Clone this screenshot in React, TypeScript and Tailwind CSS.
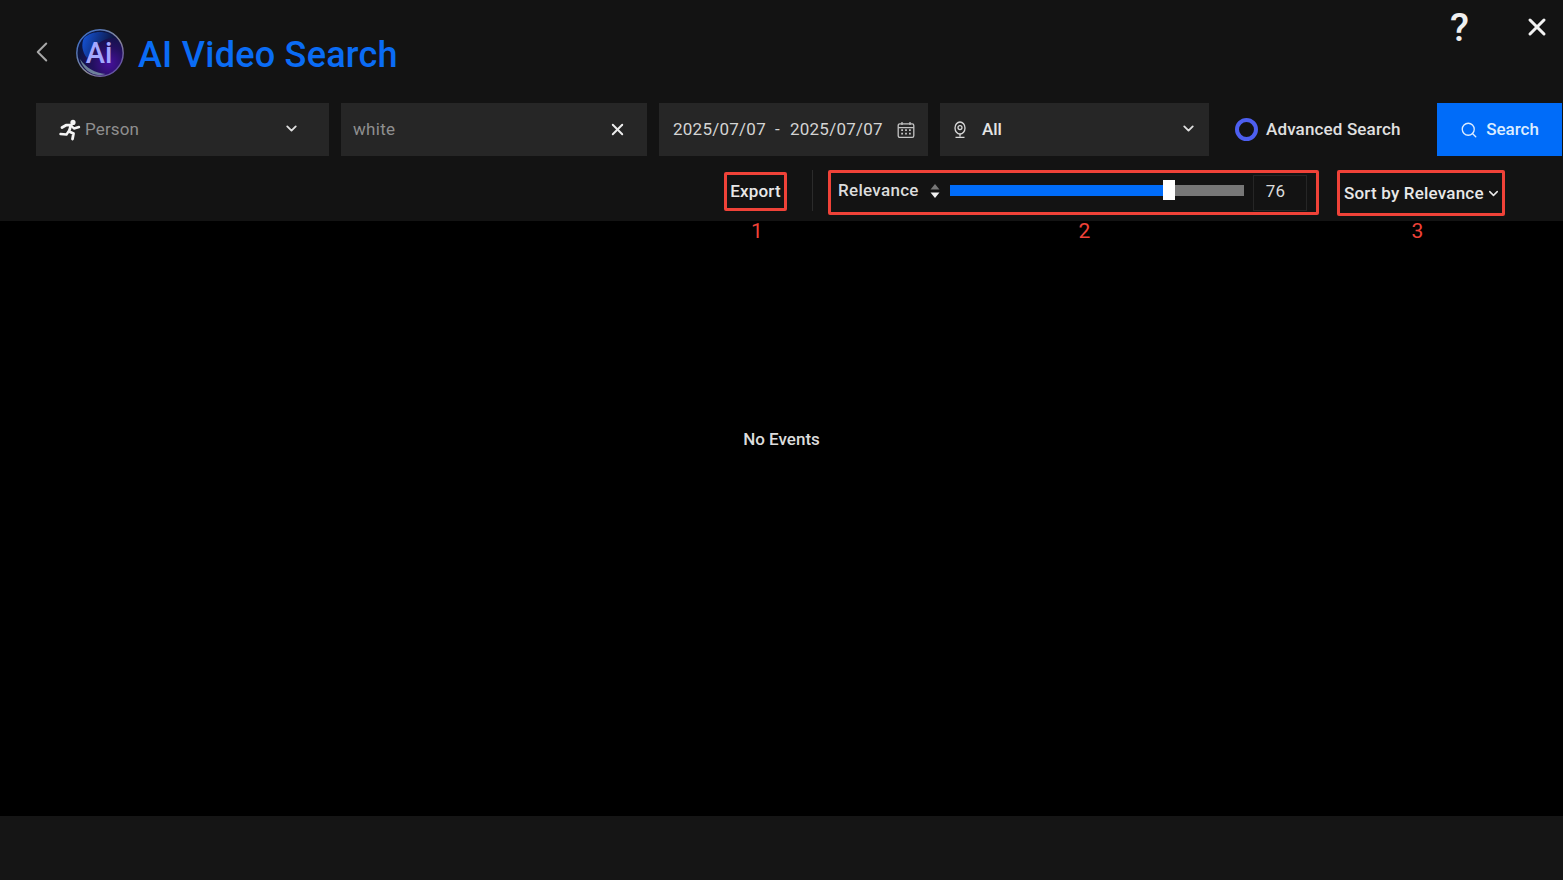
import { ChevronDown, ChevronLeft, Search, X } from "lucide-react";

function AiLogo() {
  return (
    <svg width="50" height="50" viewBox="0 0 50 50" className="shrink-0">
      <defs>
        <radialGradient id="aiBase" cx="0.7" cy="0.72" r="0.7">
          <stop offset="0" stopColor="#47109c" />
          <stop offset="0.5" stopColor="#241060" />
          <stop offset="1" stopColor="#0b1640" />
        </radialGradient>
        <linearGradient id="aiRim" x1="0" y1="0" x2="1" y2="1">
          <stop offset="0" stopColor="#2a66d0" />
          <stop offset="0.55" stopColor="#8d8d98" />
          <stop offset="1" stopColor="#5238a8" />
        </linearGradient>
        <linearGradient id="aiGlow" x1="0" y1="0" x2="1" y2="0.3">
          <stop offset="0" stopColor="#1557e0" />
          <stop offset="1" stopColor="#0c1238" />
        </linearGradient>
      </defs>
      <circle cx="25" cy="25" r="23.2" fill="url(#aiBase)" stroke="url(#aiRim)" strokeWidth="1.4" />
      <path d="M9 10C17 2 33 2 40 10C30 9 18 16 12 30C7 24 6 16 9 10Z" fill="url(#aiGlow)" />
      <path d="M5 31C11 40 20 45 31 46C20 50 8 43 5 31Z" fill="#8fb0b5" opacity="0.7" />
      <text
        x="24"
        y="35"
        textAnchor="middle"
        fontFamily="Roboto, sans-serif"
        fontSize="29"
        fontWeight="500"
        fill="#a3a8ff"
      >
        Ai
      </text>
    </svg>
  );
}

function RunnerIcon() {
  return (
    <svg width="22" height="22" viewBox="0 0 22 22" fill="none" className="shrink-0">
      <circle cx="14" cy="3.4" r="2.6" fill="#f4f4f4" />
      <path
        d="M3 8.5L7 6.2H12L10 12.5L14.5 14.5L13.5 20"
        stroke="#f4f4f4"
        strokeWidth="2.8"
        strokeLinecap="round"
        strokeLinejoin="round"
      />
      <path d="M12 6.5L15 9.5L20 8M9.5 12.5L7.5 15.5L1.5 15" stroke="#f4f4f4" strokeWidth="2.4" strokeLinecap="round" strokeLinejoin="round" />
    </svg>
  );
}

function CalendarIcon() {
  return (
    <svg width="18" height="18" viewBox="0 0 18 18" fill="none" stroke="#c4c4c4" strokeWidth="1.3" className="shrink-0">
      <rect x="1.2" y="2.8" width="15.6" height="13.6" rx="1.6" />
      <path d="M1.2 6.6H16.8M5 1V4M13 1V4" />
      <path d="M4.2 9.2H6M8.1 9.2H9.9M12 9.2H13.8M4.2 12.6H6M8.1 12.6H9.9M12 12.6H13.8" strokeWidth="1.7" />
    </svg>
  );
}

function CameraIcon() {
  return (
    <svg width="14" height="18" viewBox="0 0 14 18" fill="none" stroke="#d8d8d8" strokeWidth="1.3" className="shrink-0">
      <ellipse cx="7" cy="7" rx="5" ry="6" />
      <circle cx="7" cy="6.6" r="2" />
      <path d="M7 13V15.5M2.5 16.4H11.5" />
    </svg>
  );
}

function SortArrows() {
  return (
    <svg width="10" height="16" viewBox="0 0 10 16" className="shrink-0">
      <path d="M5 1L9.5 6.5H0.5Z" fill="#777777" />
      <path d="M5 15L9.5 9.5H0.5Z" fill="#f0f0f0" />
    </svg>
  );
}

export default function App() {
  const relevance = 76;

  return (
    <div className="flex h-[880px] w-[1563px] flex-col overflow-hidden bg-black font-['Roboto',sans-serif] text-[#e4e4e4]">
      <header className="flex h-[221px] shrink-0 flex-col bg-[#131313]">
        {/* Title */}
        <div className="flex h-[103px] items-start pl-[25px]">
          <ChevronLeft className="mt-[35px] h-[34px] w-[34px] text-[#a8a8a8]" strokeWidth={1.4} />
          <div className="mt-[28px] ml-[16px] flex items-start">
            <AiLogo />
            <h1 className="mt-[2px] ml-[13px] text-[36px] leading-[50px] font-medium tracking-[0.25px] text-[#0a6cf5]">
              AI Video Search
            </h1>
          </div>
          <div className="ml-auto flex items-center gap-[54px] pt-[8px] pr-[12px]">
            <span className="text-[39px] leading-[40px] font-medium text-[#efefef]">?</span>
            <X className="-mt-[2px] h-[28px] w-[28px] text-[#f2f2f2]" strokeWidth={2.6} />
          </div>
        </div>

        {/* Search filters */}
        <div className="flex h-[53px] items-stretch pl-[36px] text-[17px]">
          <div className="flex w-[293px] items-center bg-[#262626] pr-[29px] pl-[23px]">
            <RunnerIcon />
            <span className="ml-[4px] tracking-[0.15px] text-[#8f8f8f]">Person</span>
            <ChevronDown className="mb-[2px] ml-auto h-[17px] w-[17px] text-[#e0e0e0]" strokeWidth={2.6} />
          </div>
          <div className="ml-[12px] flex w-[306px] items-center bg-[#262626] pr-[20px] pl-[12px]">
            <span className="tracking-[0.3px] text-[#8f8f8f]">white</span>
            <X className="ml-auto h-[19px] w-[19px] text-[#ededed]" strokeWidth={2.4} />
          </div>
          <div className="ml-[12px] flex w-[269px] items-center bg-[#262626] pr-[13px] pl-[14px] tracking-[0.25px] text-[#d4d4d4]">
            <span>2025/07/07</span>
            <span className="mr-[10px] ml-[9px]">-</span>
            <span>2025/07/07</span>
            <span className="ml-auto">
              <CalendarIcon />
            </span>
          </div>
          <div className="ml-[12px] flex w-[269px] items-center bg-[#262626] pr-[12px] pl-[13px]">
            <CameraIcon />
            <span className="ml-[15px] font-medium text-[#e4e4e4]">All</span>
            <ChevronDown className="mb-[2px] ml-auto h-[17px] w-[17px] text-[#e0e0e0]" strokeWidth={2.6} />
          </div>
          <div className="ml-[26px] flex w-[202px] items-center">
            <span className="h-[23px] w-[23px] shrink-0 rounded-full border-[4px] border-[#4d5ff0]" />
            <span className="ml-[8px] font-medium tracking-[0.15px] text-[#e0e0e0]">Advanced Search</span>
          </div>
          <button className="flex w-[125px] items-center justify-center gap-[8px] bg-[#006cf9] font-medium text-[#dcecff]">
            <Search className="h-[18px] w-[18px]" strokeWidth={1.8} />
            Search
          </button>
        </div>

        {/* Result tools */}
        <div className="flex flex-1 items-start justify-end pt-[14px] pr-[58px] text-[17px] font-medium tracking-[0.2px]">
          <div className="relative mt-[2px] flex h-[39px] w-[63px] items-center justify-center rounded-[2px] border-[3px] border-[#ef4238] text-[#e8e8e8]">
            Export
            <span className="absolute top-[43px] left-0 w-full pl-[3px] text-center text-[21px] leading-[26px] font-normal text-[#ef4238]">
              1
            </span>
          </div>
          <div className="mr-[15px] ml-[25px] h-[41px] w-px bg-[#2b2b2b]" />
          <div className="relative flex h-[45px] w-[491px] items-center rounded-[2px] border-[3px] border-[#ef4238] pr-[9px] pb-[4px] pl-[7px] text-[#dcdcdc]">
            <span className="tracking-[0.3px]">Relevance</span>
            <span className="ml-[11px]">
              <SortArrows />
            </span>
            <div className="relative ml-[10px] h-[11px] w-[294px] bg-[#777777]">
              <div className="h-full bg-[#006cf9]" style={{ width: `${relevance - 1.5}%` }} />
              <div className="absolute top-[-5px] left-[213px] h-[20px] w-[12px] bg-white" />
            </div>
            <div className="mt-[4px] ml-[9px] flex h-[36px] w-[54px] items-center border border-[#262626] pb-[1px] pl-[12px] font-normal">
              {relevance}
            </div>
            <span className="absolute top-[45px] left-0 w-full pl-[22px] text-center text-[21px] leading-[26px] font-normal text-[#ef4238]">
              2
            </span>
          </div>
          <div className="relative ml-[18px] flex h-[46px] w-[168px] items-center rounded-[2px] border-[3px] border-[#ef4238] pt-[1px] pl-[4px] text-[#e8e8e8]">
            <span className="whitespace-nowrap">Sort by Relevance</span>
            <ChevronDown className="ml-[2px] h-[15px] w-[15px]" strokeWidth={2.4} />
            <span className="absolute top-[45px] left-0 w-full pr-[7px] text-center text-[21px] leading-[26px] font-normal text-[#ef4238]">
              3
            </span>
          </div>
        </div>
      </header>

      <main className="flex flex-1 items-center justify-center bg-black pb-[158px] text-[17px] font-medium text-[#dcdcdc]">
        No Events
      </main>

      <footer className="h-[64px] shrink-0 bg-[#151515]" />
    </div>
  );
}
